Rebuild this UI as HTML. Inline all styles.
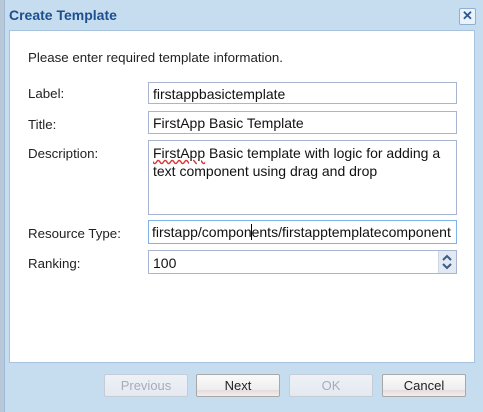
<html><head><style>
body{margin:0;width:483px;height:412px;background:#cde0f0;position:relative;overflow:hidden;font-family:"Liberation Sans",sans-serif;font-size:13.3px;color:#222}
.abs{position:absolute}
.inp{position:absolute;left:148px;width:309px;border:1px solid #a9b5d0;background:#fff;box-sizing:border-box;padding:3px 4px;font-size:14px;color:#111;white-space:nowrap;overflow:hidden}
.lbl{position:absolute;left:28px;font-size:13.3px}
.btn{position:absolute;top:374px;height:23px;width:84px;box-sizing:border-box;border:1px solid #a8a8a8;border-radius:2px;background:linear-gradient(#fafafa,#eee 70%,#e8dada 71%,#eee);text-align:center;line-height:21px;font-size:13px}
.dis{color:#aab;border-color:#c4ccd8;background:linear-gradient(#eef2f7,#e4e9f0)}
</style></head><body>
<div class="abs" style="left:0;top:0;width:4px;height:412px;background:#b8c8d8"></div>
<div class="abs" style="left:4px;top:0;width:479px;height:412px;background:#c6dcef;border-left:1px solid #9fbad4"></div>
<div class="abs" style="left:9px;top:7px;font-weight:bold;color:#1c4f8e;font-size:14px">Create Template</div>
<div class="abs" style="left:459px;top:8px;width:15px;height:15px;border:1px solid #8eb0d2;border-radius:2px;background:#eaf3fb;color:#2a5a96;font-size:13px;line-height:14px;text-align:center;font-weight:bold">✕</div>
<div class="abs" style="left:9px;top:30px;width:466px;height:333px;background:#fff;border:1px solid #a7c3de;box-sizing:border-box"></div>
<div class="lbl" style="top:50px">Please enter required template information.</div>
<div class="lbl" style="top:86px">Label:</div>
<div class="inp" style="top:82px;height:22px">firstappbasictemplate</div>
<div class="lbl" style="top:117px">Title:</div>
<div class="inp" style="top:111px;height:23px">FirstApp Basic Template</div>
<div class="lbl" style="top:146px">Description:</div>
<div class="inp" style="top:140px;height:75px;white-space:normal;line-height:18px;padding-right:12px"><span style="text-decoration:underline wavy #d33">FirstApp</span> Basic template with logic for adding a text component using drag and drop</div>
<div class="lbl" style="top:226px">Resource Type:</div>
<div class="inp" style="top:220px;height:24px;border-color:#7eb4ea;padding-left:3px">firstapp/compon<span style="border-left:1px solid #000;margin-left:-1px"></span>ents/firstapptemplatecomponent</div>
<div class="lbl" style="top:256px">Ranking:</div>
<div class="inp" style="top:250px;height:24px;padding-top:4px">100</div>
<svg class="abs" style="left:438px;top:251px" width="18" height="22"><rect width="18" height="22" fill="#e2e9f2"/><line x1="0" y1="0" x2="0" y2="22" stroke="#b8c4d8"/><path d="M5 9 L9 5 L13 9" fill="none" stroke="#3a5a8a" stroke-width="2"/><path d="M5 13 L9 17 L13 13" fill="none" stroke="#3a5a8a" stroke-width="2"/></svg>
<div class="btn dis" style="left:104px">Previous</div>
<div class="btn" style="left:196px">Next</div>
<div class="btn dis" style="left:289px">OK</div>
<div class="btn" style="left:382px">Cancel</div>
</body></html>
